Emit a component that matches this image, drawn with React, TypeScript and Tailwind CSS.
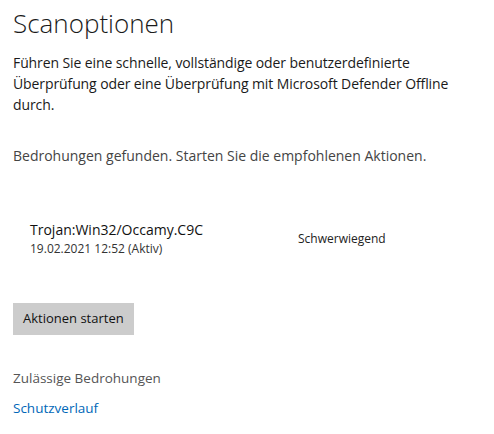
export default function App() {
  return (
    <div className="w-[494px] h-[434px] bg-white text-[#000] overflow-hidden font-['Open_Sans',sans-serif]">
      <div className="pl-[13px] pr-3 pt-[4px]">
        <h1 className="text-[26px] leading-[38px] font-light text-[#1a1a1a]">Scanoptionen</h1>
        <p className="mt-[10px] text-[14px] leading-[21px] text-[#1a1a1a] tracking-[-0.1px] w-[460px]">
          Führen Sie eine schnelle, vollständige oder benutzerdefinierte Überprüfung oder eine Überprüfung mit Microsoft Defender Offline durch.
        </p>
        <p className="mt-[30px] text-[14px] leading-[21px] text-[#444]">
          Bedrohungen gefunden. Starten Sie die empfohlenen Aktionen.
        </p>
        <div className="mt-[54px] pl-[17px] flex items-center">
          <div className="w-[268px]">
            <div className="text-[14px] leading-[20px] text-[#111]">Trojan:Win32/Occamy.C9C</div>
            <div className="text-[12px] leading-[18px] text-[#333]">19.02.2021 12:52 (Aktiv)</div>
          </div>
          <div className="text-[12px] text-[#222]">Schwerwiegend</div>
        </div>
        <button className="mt-[45px] h-[32px] px-[10px] bg-[#cccccc] text-[13px] text-[#111]">
          Aktionen starten
        </button>
        <div className="mt-[33px] text-[13.5px] leading-[20px] text-[#555]">Zulässige Bedrohungen</div>
        <a href="#" className="block mt-[10px] text-[13.5px] leading-[20px] text-[#0067b8]">Schutzverlauf</a>
      </div>
    </div>
  );
}
